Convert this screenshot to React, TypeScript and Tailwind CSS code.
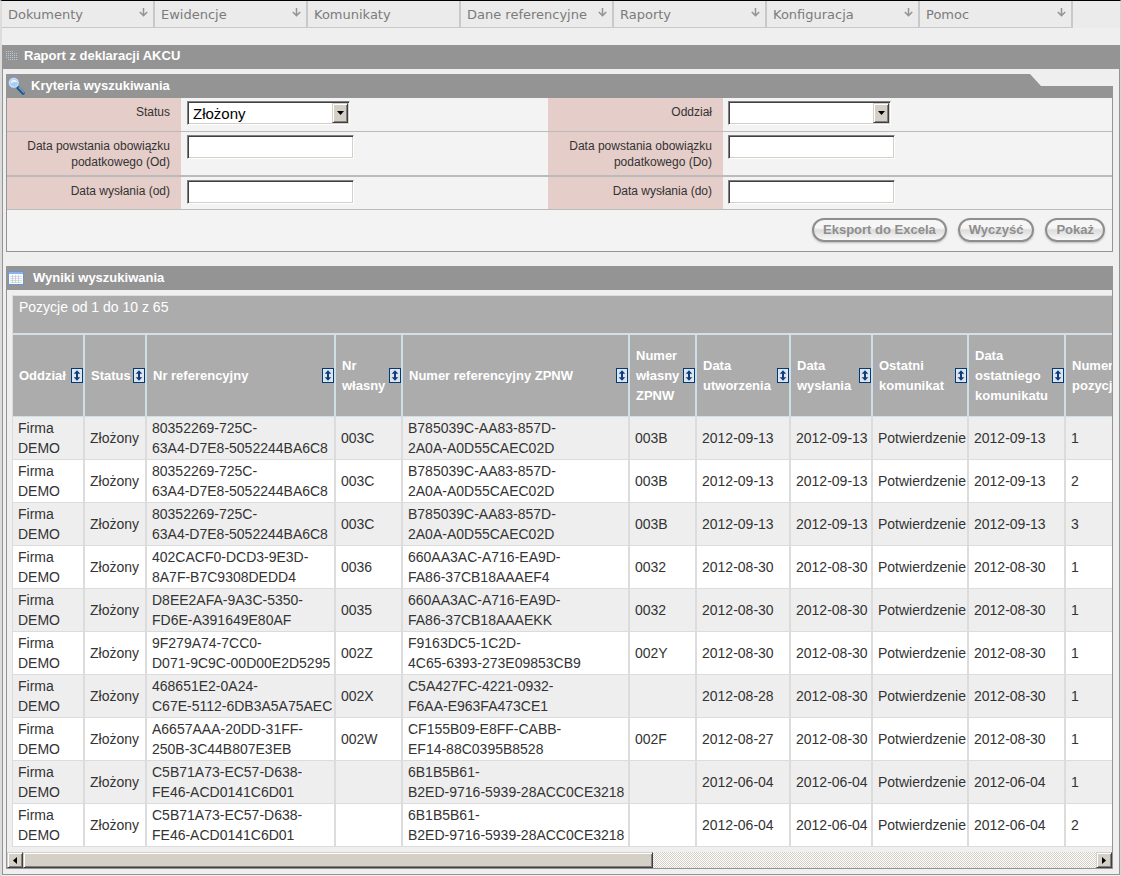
import React from "react";

/**DATA */
const menu = [
  { label: "Dokumenty", arrow: true },
  { label: "Ewidencje", arrow: true },
  { label: "Komunikaty", arrow: false },
  { label: "Dane referencyjne", arrow: true },
  { label: "Raporty", arrow: true },
  { label: "Konfiguracja", arrow: true },
  { label: "Pomoc", arrow: true },
];

const columns = [
  { lines: ["Oddział"], width: "w-[72px]" },
  { lines: ["Status"], width: "w-[62px]" },
  { lines: ["Nr referencyjny"], width: "w-[189px]" },
  { lines: ["Nr", "własny"], width: "w-[67px]" },
  { lines: ["Numer referencyjny ZPNW"], width: "w-[227px]" },
  { lines: ["Numer", "własny", "ZPNW"], width: "w-[67px]" },
  { lines: ["Data", "utworzenia"], width: "w-[94px]" },
  { lines: ["Data", "wysłania"], width: "w-[82px]" },
  { lines: ["Ostatni", "komunikat"], width: "w-[96px]" },
  { lines: ["Data", "ostatniego", "komunikatu"], width: "w-[97px]" },
  { lines: ["Numer", "pozycji"], width: "w-[96px]" },
];

const rows = [
  ["80352269-725C-|63A4-D7E8-5052244BA6C8", "003C", "B785039C-AA83-857D-|2A0A-A0D55CAEC02D", "003B", "2012-09-13", "2012-09-13", "1"],
  ["80352269-725C-|63A4-D7E8-5052244BA6C8", "003C", "B785039C-AA83-857D-|2A0A-A0D55CAEC02D", "003B", "2012-09-13", "2012-09-13", "2"],
  ["80352269-725C-|63A4-D7E8-5052244BA6C8", "003C", "B785039C-AA83-857D-|2A0A-A0D55CAEC02D", "003B", "2012-09-13", "2012-09-13", "3"],
  ["402CACF0-DCD3-9E3D-|8A7F-B7C9308DEDD4", "0036", "660AA3AC-A716-EA9D-|FA86-37CB18AAAEF4", "0032", "2012-08-30", "2012-08-30", "1"],
  ["D8EE2AFA-9A3C-5350-|FD6E-A391649E80AF", "0035", "660AA3AC-A716-EA9D-|FA86-37CB18AAAEKK", "0032", "2012-08-30", "2012-08-30", "1"],
  ["9F279A74-7CC0-|D071-9C9C-00D00E2D5295", "002Z", "F9163DC5-1C2D-|4C65-6393-273E09853CB9", "002Y", "2012-08-30", "2012-08-30", "1"],
  ["468651E2-0A24-|C67E-5112-6DB3A5A75AEC", "002X", "C5A427FC-4221-0932-|F6AA-E963FA473CE1", "", "2012-08-28", "2012-08-30", "1"],
  ["A6657AAA-20DD-31FF-|250B-3C44B807E3EB", "002W", "CF155B09-E8FF-CABB-|EF14-88C0395B8528", "002F", "2012-08-27", "2012-08-30", "1"],
  ["C5B71A73-EC57-D638-|FE46-ACD0141C6D01", "", "6B1B5B61-|B2ED-9716-5939-28ACC0CE3218", "", "2012-06-04", "2012-06-04", "1"],
  ["C5B71A73-EC57-D638-|FE46-ACD0141C6D01", "", "6B1B5B61-|B2ED-9716-5939-28ACC0CE3218", "", "2012-06-04", "2012-06-04", "2"],
];

/**ICONS */
const MenuArrow = () => (
  <svg width="9" height="9" viewBox="0 0 9 9" fill="none" stroke="#949494" strokeWidth="1.5" aria-hidden="true">
    <path d="M4.5 0V7.5M0.8 4L4.5 7.6L8.2 4" />
  </svg>
);

const DotsIcon = () => (
  <svg width="11" height="9" viewBox="0 0 11 9" fill="#b4cad8" aria-hidden="true">
    {[0, 2, 4, 6, 8].map((y) =>
      [0, 2, 4, 6, 8, 10].map((x) =>
        (y === 0 && x > 6) || (y === 8 && x < 2) ? null : <rect key={`${x}-${y}`} x={x} y={y} width="1" height="1" />
      )
    )}
  </svg>
);

const SearchIcon = () => (
  <svg width="18" height="18" viewBox="0 0 18 18" fill="none" aria-hidden="true">
    <path d="M10 10.8L15.2 16" stroke="#234f80" strokeWidth="3.2" strokeLinecap="round" />
    <path d="M11 10.8L15.8 15.4" stroke="#5fa4dc" strokeWidth="1.4" strokeLinecap="round" />
    <circle cx="5.8" cy="5.8" r="4.6" fill="#a9cef6" stroke="#dce9fa" strokeWidth="1.3" />
    <circle cx="5.8" cy="5.8" r="5.3" stroke="#6f9ddb" strokeWidth="0.6" />
    <path d="M2.6 6.4Q5 4.2 9 5.2Q8.4 2.4 5.8 2.4Q3 2.6 2.6 6.4Z" fill="#e6f2ff" />
  </svg>
);

const TableIcon = () => (
  <svg width="16" height="14" viewBox="0 0 16 14" aria-hidden="true">
    <rect x="0.5" y="0.5" width="15" height="13" fill="#fbfcfe" stroke="#6f95cf" />
    <rect x="1" y="1" width="14" height="2" fill="#8bb3ea" />
    <path d="M2 5.5H14M2 7.5H14M2 9.5H14M2 11.5H14" stroke="#cdd1d8" strokeWidth="0.7" />
    <path d="M4.5 4V12M7.5 4V12M10.5 4V12" stroke="#c3c7cf" strokeWidth="0.8" />
  </svg>
);

const SortIcon = () => (
  <svg width="12" height="15" viewBox="0 0 12 15" aria-hidden="true">
    <rect x="0.5" y="0.5" width="11" height="14" fill="#dfe3ee" stroke="#003b73" />
    <path d="M6 2.3L9.3 5.8H7V9.2H9.3L6 12.7L2.7 9.2H5V5.8H2.7Z" fill="#0b3f7c" />
  </svg>
);

/**COMPONENTS */
const TextField = ({ id }: { id: string }) => (
  <input
    id={id}
    type="text"
    className="block h-6 w-[167px] border border-t-[#808080] border-l-[#808080] border-r-white border-b-white bg-white px-1 shadow-[inset_1px_1px_0_#404040,inset_-1px_-1px_0_#d4d0c8] outline-none"
  />
);

const SelectField = ({ id, options }: { id: string; options: string[] }) => (
  <div className="relative w-[163px]">
    <select
      id={id}
      className="block h-6 w-full appearance-none border border-t-[#808080] border-l-[#808080] border-r-white border-b-white bg-white pt-px pl-[5px] text-[15px] text-black shadow-[inset_1px_1px_0_#404040,inset_-1px_-1px_0_#d4d0c8] outline-none"
    >
      {options.map((option) => (
        <option key={option}>{option}</option>
      ))}
    </select>
    <span className="pointer-events-none absolute top-0.5 right-0.5 flex h-5 w-4 items-center justify-center border border-t-[#d4d0c8] border-l-[#d4d0c8] border-r-[#404040] border-b-[#404040] bg-[#d4d0c8] shadow-[inset_1px_1px_0_#fff,inset_-1px_-1px_0_#808080]">
      <svg width="7" height="4" viewBox="0 0 7 4" aria-hidden="true">
        <path d="M0 0H7L3.5 4Z" fill="#000" />
      </svg>
    </span>
  </div>
);

const FieldLabel = ({ id, children }: { id: string; children: React.ReactNode }) => (
  <label htmlFor={id} className="bg-[#e5cdc9] pt-1.5 pr-[11px] text-right text-[12px] leading-4">
    {children}
  </label>
);

const PillButton = ({ children }: { children: React.ReactNode }) => (
  <button
    type="button"
    className="h-6 rounded-full border-2 border-[#8e8e8e] bg-linear-to-b from-[#f6f6f6] from-40% via-[#dcdcdc] via-50% to-[#f8f8f8] px-[9px] text-[13px] leading-5 font-bold whitespace-nowrap text-[#8e8e8e] shadow-[0_1px_2px_#bbb]"
  >
    {children}
  </button>
);

const Lines = ({ text }: { text: string }) => (
  <>
    {text.split("|").map((line) => (
      <span key={line} className="block">{line}</span>
    ))}
  </>
);

const ScrollButton = ({ label, path, onClick }: { label: string; path: string; onClick: () => void }) => (
  <button
    type="button"
    aria-label={label}
    onClick={onClick}
    className="flex h-4 w-4 shrink-0 items-center justify-center border border-t-[#d4d0c8] border-l-[#d4d0c8] border-r-[#404040] border-b-[#404040] bg-[#d4d0c8] shadow-[inset_1px_1px_0_#fff,inset_-1px_-1px_0_#808080]"
  >
    <svg width="4" height="7" viewBox="0 0 4 7" aria-hidden="true">
      <path d={path} fill="#000" />
    </svg>
  </button>
);

const App: React.FC = () => {
  /**VARIABLES */
  const viewport = React.useRef<HTMLDivElement>(null);

  /**FUNCTIONS */
  const scroll = (left: number) => viewport.current?.scrollBy({ left });

  /**TEMPLATE */
  return (
    <div className="border-t border-r border-l-2 border-t-black border-r-[#d6d6d6] border-l-[#dcdcdc] bg-[#efefef] pb-px font-['Liberation_Sans',Arial,sans-serif] text-[#333]">
      {/* Menu */}
      <nav className="flex bg-[#ebebeb] font-['DejaVu_Sans',Verdana,sans-serif] text-[13px] text-[#7b7b7b]">
        {menu.map((item) => (
          <a
            key={item.label}
            href="#"
            className="flex h-[27px] w-[153px] justify-between border-r-2 border-b border-[#c9c9c9] pr-[5px] pl-1.5 leading-7 whitespace-nowrap"
          >
            {item.label}
            {item.arrow && <span className="pt-[7px] leading-none"><MenuArrow /></span>}
          </a>
        ))}
      </nav>

      <main className="mt-[17px] border-r border-b border-l border-[#949494]">
        <h1 className="flex h-6 items-center gap-[7px] bg-[#949494] pb-[3px] pl-[3px] text-[13px] font-bold text-white">
          <DotsIcon />
          Raport z deklaracji AKCU
        </h1>

        <div className="pt-[5px] pr-1.5 pb-[5px] pl-[3px]">
          {/* Search criteria */}
          <section>
            <h2 className="flex h-6 items-center gap-[5px] bg-[#949494] pb-px pl-0.5 text-[13px] font-bold text-white [clip-path:polygon(0_0,calc(100%-83px)_0,calc(100%-72px)_12px,100%_12px,100%_100%,0_100%)]">
              <SearchIcon />
              Kryteria wyszukiwania
            </h2>
            <form className="border-r border-b border-l border-[#949494] bg-[#f3f3f3]">
              <div className="grid h-[34px] grid-cols-[174px_367fr_175px_389fr] border-b border-[#bbb]">
                <FieldLabel id="status">Status</FieldLabel>
                <div className="pt-[3px] pl-1.5"><SelectField id="status" options={["Złożony"]} /></div>
                <FieldLabel id="branch">Oddział</FieldLabel>
                <div className="pt-[3px] pl-[5px]"><SelectField id="branch" options={[""]} /></div>
              </div>
              <div className="grid h-[45px] grid-cols-[174px_367fr_175px_389fr] border-b-2 border-[#bbb]">
                <FieldLabel id="due-from">Data powstania obowiązku<br />podatkowego (Od)</FieldLabel>
                <div className="pt-[3px] pl-1.5"><TextField id="due-from" /></div>
                <FieldLabel id="due-to">Data powstania obowiązku<br />podatkowego (Do)</FieldLabel>
                <div className="pt-[3px] pl-[5px]"><TextField id="due-to" /></div>
              </div>
              <div className="grid h-[33px] grid-cols-[174px_367fr_175px_389fr] border-b border-[#bbb]">
                <FieldLabel id="sent-from">Data wysłania (od)</FieldLabel>
                <div className="pt-[3px] pl-1.5"><TextField id="sent-from" /></div>
                <FieldLabel id="sent-to">Data wysłania (do)</FieldLabel>
                <div className="pt-[3px] pl-[5px]"><TextField id="sent-to" /></div>
              </div>
              <div className="flex h-[41px] justify-end gap-[11px] pt-2 pr-[7px]">
                <PillButton>Eksport do Excela</PillButton>
                <PillButton>Wyczyść</PillButton>
                <PillButton>Pokaż</PillButton>
              </div>
            </form>
          </section>

          {/* Search results */}
          <section className="mt-[14px]">
            <h2 className="flex h-6 items-center gap-[9px] bg-[#949494] pb-px pl-0.5 text-[13px] font-bold text-white">
              <TableIcon />
              Wyniki wyszukiwania
            </h2>
            <div className="border-r border-b border-l border-[#949494]">
              <div ref={viewport} className="overflow-hidden pt-[5px] pb-[5px] pl-[5px]">
                <table className="w-[1150px] table-fixed border-separate border-spacing-0 border-t border-l border-[#dcdcdc] text-[14px] leading-5">
                  <colgroup>
                    {columns.map((column) => (
                      <col key={column.lines.join(" ")} className={column.width} />
                    ))}
                  </colgroup>
                  <thead className="bg-[#acacac] text-left text-white">
                    <tr className="h-[39px]">
                      <td colSpan={11} className="border-b-2 border-[#d5dfe5] pt-px pl-1.5 align-top">
                        Pozycje od 1 do 10 z 65
                      </td>
                    </tr>
                    <tr className="h-[82px]">
                      {columns.map((column) => (
                        <th key={column.lines.join(" ")} className="border-r-2 border-b border-[#cfdfe8] pl-1.5 text-[13px] font-bold">
                          <div className="flex items-center justify-between">
                            <span className="whitespace-nowrap">
                              <Lines text={column.lines.join("|")} />
                            </span>
                            <button type="button" aria-label={`Sortuj: ${column.lines.join(" ")}`}>
                              <SortIcon />
                            </button>
                          </div>
                        </th>
                      ))}
                    </tr>
                  </thead>
                  <tbody className="[&_td]:border-r-2 [&_td]:border-b [&_td]:border-[#dcdcdc] [&_td]:pl-[5px] [&_td]:whitespace-nowrap">
                    {rows.map(([reference, own, zpnw, ownZpnw, created, sent, position], index) => (
                      <tr key={index} className="h-[43px] odd:bg-[#eee] even:bg-white">
                        <td><Lines text="Firma|DEMO" /></td>
                        <td>Złożony</td>
                        <td><Lines text={reference} /></td>
                        <td>{own}</td>
                        <td><Lines text={zpnw} /></td>
                        <td>{ownZpnw}</td>
                        <td>{created}</td>
                        <td>{sent}</td>
                        <td>Potwierdzenie</td>
                        <td>{sent}</td>
                        <td>{position}</td>
                      </tr>
                    ))}
                  </tbody>
                </table>
              </div>

              {/* Scroll bar */}
              <div className="flex h-4 bg-[#e9e7e3] bg-[repeating-conic-gradient(#d4d0c8_0_25%,#fff_0_50%)] bg-size-[2px_2px]">
                <ScrollButton label="W lewo" path="M4 0V7L0 3.5Z" onClick={() => scroll(-60)} />
                <div className="h-4 w-[57%] border border-t-[#d4d0c8] border-l-[#d4d0c8] border-r-[#404040] border-b-[#404040] bg-[#d4d0c8] shadow-[inset_1px_1px_0_#fff,inset_-1px_-1px_0_#808080]" />
                <div className="flex-1" />
                <ScrollButton label="W prawo" path="M0 0V7L4 3.5Z" onClick={() => scroll(60)} />
              </div>
            </div>
          </section>
        </div>
      </main>
    </div>
  );
};

export default App;
